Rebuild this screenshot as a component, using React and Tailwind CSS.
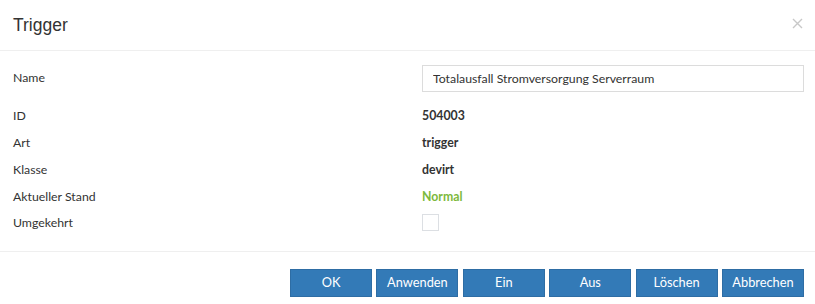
export default function App() {
  const rows = [
    { label: 'ID', value: '504003' },
    { label: 'Art', value: 'trigger' },
    { label: 'Klasse', value: 'devirt' },
    { label: 'Aktueller Stand', value: 'Normal', green: true },
  ];
  const buttons = ['OK', 'Anwenden', 'Ein', 'Aus', 'Löschen', 'Abbrechen'];

  return (
    <div className="w-[815px] h-[304px] bg-white text-[#333] overflow-hidden" style={{ fontFamily: 'Lato, "Open Sans", sans-serif' }}>
      <div className="h-[51px] border-b border-[#efefef] flex items-center justify-between pl-[13px] pr-[12px]">
        <h3 className="text-[17.5px] leading-none text-[#333] mt-[1px]" style={{ fontFamily: '"Liberation Sans", Arial, sans-serif' }}>
          Trigger
        </h3>
        <button className="w-[11px] h-[11px] -mt-[3px]">
          <svg viewBox="0 0 11 11" className="w-[11px] h-[11px]">
            <path d="M1 1 L10 10 M10 1 L1 10" stroke="#c8c8c8" strokeWidth="1.4" fill="none" />
          </svg>
        </button>
      </div>

      <div className="pt-[14px] pb-[15px] pl-[13px] pr-[11px] border-b border-[#efefef] text-[12.3px]">
        <div className="flex items-center mb-[9px]">
          <div className="w-[409px] -mt-[1px]">Name</div>
          <input
            type="text"
            readOnly
            value="Totalausfall Stromversorgung Serverraum"
            className="flex-1 h-[27px] border border-[#dcdcdc] px-[10px] pb-[1px] text-[12.3px] text-[#333] outline-none"
          />
        </div>
        {rows.map((r) => (
          <div key={r.label} className="flex items-center h-[27px] pt-[3px]">
            <div className="w-[409px]">{r.label}</div>
            <div className={'font-bold ' + (r.green ? 'text-[#7db93c]' : 'text-[#333]')}>{r.value}</div>
          </div>
        ))}
        <div className="flex items-center h-[27px]">
          <div className="w-[409px] pt-[1px]">Umgekehrt</div>
          <div className="w-[17px] h-[17px] border border-[#dcdfe3] bg-white" />
        </div>
      </div>

      <div className="flex justify-end gap-[4.4px] pt-[17px] pr-[11px]">
        {buttons.map((b) => (
          <button
            key={b}
            className="w-[82px] h-[28px] bg-[#337ab7] border border-[#2e6da4] text-white text-[12.8px]"
          >
            {b}
          </button>
        ))}
      </div>
    </div>
  );
}
